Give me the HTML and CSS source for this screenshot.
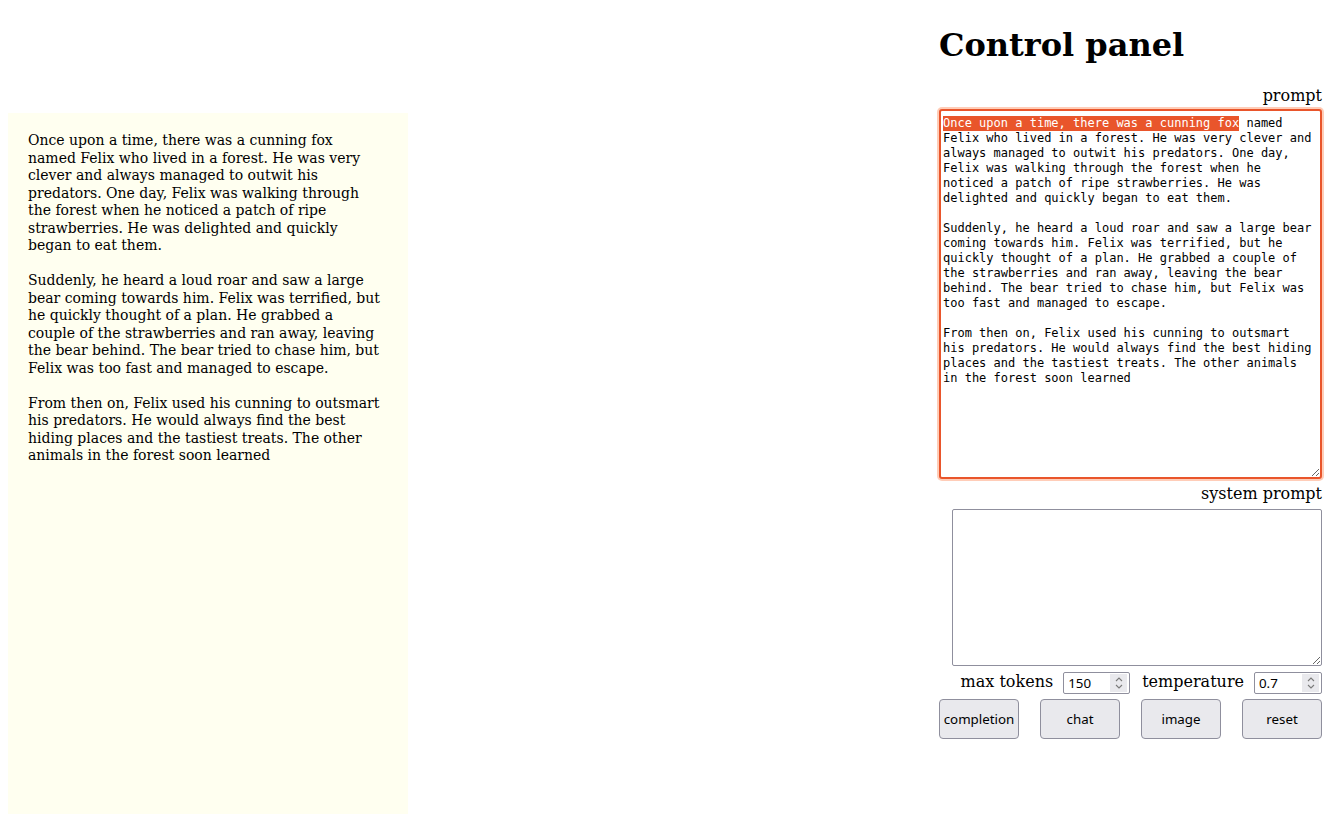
FILE: index.html
```html
<!DOCTYPE html>
<html lang="en">
<head>
<meta charset="utf-8">
<title>Control panel</title>
<link rel="stylesheet" href="styles.css">
</head>
<body>
<main class="page">
  <section class="output">
    <p>Once upon a time, there was a cunning fox named Felix who lived in a forest. He was very clever and always managed to outwit his predators. One day, Felix was walking through the forest when he noticed a patch of ripe strawberries. He was delighted and quickly began to eat them.</p>
    <p>Suddenly, he heard a loud roar and saw a large bear coming towards him. Felix was terrified, but he quickly thought of a plan. He grabbed a couple of the strawberries and ran away, leaving the bear behind. The bear tried to chase him, but Felix was too fast and managed to escape.</p>
    <p>From then on, Felix used his cunning to outsmart his predators. He would always find the best hiding places and the tastiest treats. The other animals in the forest soon learned</p>
  </section>
  <aside class="panel">
    <h1 class="title">Control panel</h1>
    <label class="label" for="prompt">prompt</label>
    <textarea id="prompt" class="prompt">Once upon a time, there was a cunning fox named Felix who lived in a forest. He was very clever and always managed to outwit his predators. One day, Felix was walking through the forest when he noticed a patch of ripe strawberries. He was delighted and quickly began to eat them.

Suddenly, he heard a loud roar and saw a large bear coming towards him. Felix was terrified, but he quickly thought of a plan. He grabbed a couple of the strawberries and ran away, leaving the bear behind. The bear tried to chase him, but Felix was too fast and managed to escape.

From then on, Felix used his cunning to outsmart his predators. He would always find the best hiding places and the tastiest treats. The other animals in the forest soon learned</textarea>
    <label class="label label-system" for="system">system prompt</label>
    <textarea id="system" class="system"></textarea>
    <div class="params">
      <label class="param-label" for="maxtok">max tokens</label>
      <div class="num num-narrow">
        <input id="maxtok" class="num-input" type="number" value="150">
        <span class="spin"><svg width="10" height="14" viewBox="0 0 10 14"><path d="M2 5 L5 2 L8 5 M2 9 L5 12 L8 9" fill="none" stroke="#7a7a7a" stroke-width="1.1"/></svg></span>
      </div>
      <label class="param-label param-gap" for="temp">temperature</label>
      <div class="num">
        <input id="temp" class="num-input" type="number" value="0.7" step="0.1">
        <span class="spin"><svg width="10" height="14" viewBox="0 0 10 14"><path d="M2 5 L5 2 L8 5 M2 9 L5 12 L8 9" fill="none" stroke="#7a7a7a" stroke-width="1.1"/></svg></span>
      </div>
    </div>
    <div class="buttons">
      <button class="btn" type="button">completion</button>
      <button class="btn" type="button">chat</button>
      <button class="btn" type="button">image</button>
      <button class="btn" type="button">reset</button>
    </div>
  </aside>
</main>
<script src="script.js"></script>
</body>
</html>
```
FILE: styles.css
```css
html, body {
  margin: 0;
  padding: 0;
  background: #ffffff;
}
body {
  padding: 8px 7px 8px 8px;
  font-family: "DejaVu Serif", serif;
  color: #000;
}
.page {
  display: flex;
  justify-content: space-between;
  align-items: flex-start;
}
.output {
  width: 400px;
  height: 701px;
  box-sizing: border-box;
  margin-top: 105px;
  padding: 19px 26px 19px 20px;
  background: #fffff0;
  font-size: 14px;
  line-height: 17.5px;
}
.output p {
  margin: 0 0 17.5px;
}
.panel {
  width: 383px;
  display: flex;
  flex-direction: column;
  align-items: flex-end;
}
.title {
  align-self: flex-start;
  margin: 19px 0 22px;
  font-size: 32px;
  font-weight: bold;
  line-height: 37px;
}
.label {
  font-size: 16px;
  line-height: 19px;
  margin-bottom: 4px;
}
.label-system {
  margin-top: 5px;
  margin-bottom: 6px;
}
textarea {
  box-sizing: border-box;
  font-family: "DejaVu Sans Mono", monospace;
  font-size: 12px;
  line-height: 15px;
  color: #000;
  background: #fff;
  resize: both;
  margin: 0;
}
.prompt {
  width: 383px;
  height: 370px;
  padding: 5px 2px 2px;
  border: 2px solid #e9552b;
  border-radius: 3px;
  box-shadow: 0 0 0 2px #ffcdb8;
  outline: none;
}
.prompt::selection {
  background: #e9552b;
  color: #fff;
}
.system {
  width: 370px;
  height: 157px;
  padding: 2px;
  border: 1px solid #8f8f9d;
  border-radius: 2px;
}
.params {
  display: flex;
  align-items: center;
  gap: 10px;
  margin-top: 6px;
  height: 22px;
}
.param-label {
  font-size: 16px;
  line-height: 19px;
  margin-top: -4px;
}
.param-gap {
  margin-left: 2px;
}
.num {
  display: flex;
  align-items: center;
  box-sizing: border-box;
  width: 68px;
  height: 22px;
  border: 1px solid #8f8f9d;
  border-radius: 2px;
  background: #fff;
  padding: 1px 2px 1px 4px;
}
.num-narrow {
  width: 67px;
}
.num-input {
  flex: 1;
  min-width: 0;
  border: none;
  outline: none;
  padding: 0;
  margin: 0;
  height: 18px;
  font-family: "Noto Sans", sans-serif;
  font-size: 13.33px;
  color: #000;
  background: transparent;
  -moz-appearance: textfield;
  appearance: textfield;
}
.num-input::-webkit-inner-spin-button,
.num-input::-webkit-outer-spin-button {
  -webkit-appearance: none;
  margin: 0;
}
.spin {
  display: flex;
  align-items: center;
  justify-content: center;
  width: 17px;
  height: 18px;
  background: #e9e9ed;
}
.buttons {
  display: flex;
  justify-content: space-between;
  width: 383px;
  margin-top: 5px;
}
.btn {
  width: 80px;
  height: 40px;
  box-sizing: border-box;
  padding: 0;
  border: 1px solid #8f8f9d;
  border-radius: 4px;
  background: #e9e9ed;
  font-family: "Noto Sans", sans-serif;
  font-size: 13.33px;
  color: #000;
}
```
FILE: script.js
```js
var ta = document.getElementById('prompt');
ta.focus();
ta.setSelectionRange(0, 41);
```
